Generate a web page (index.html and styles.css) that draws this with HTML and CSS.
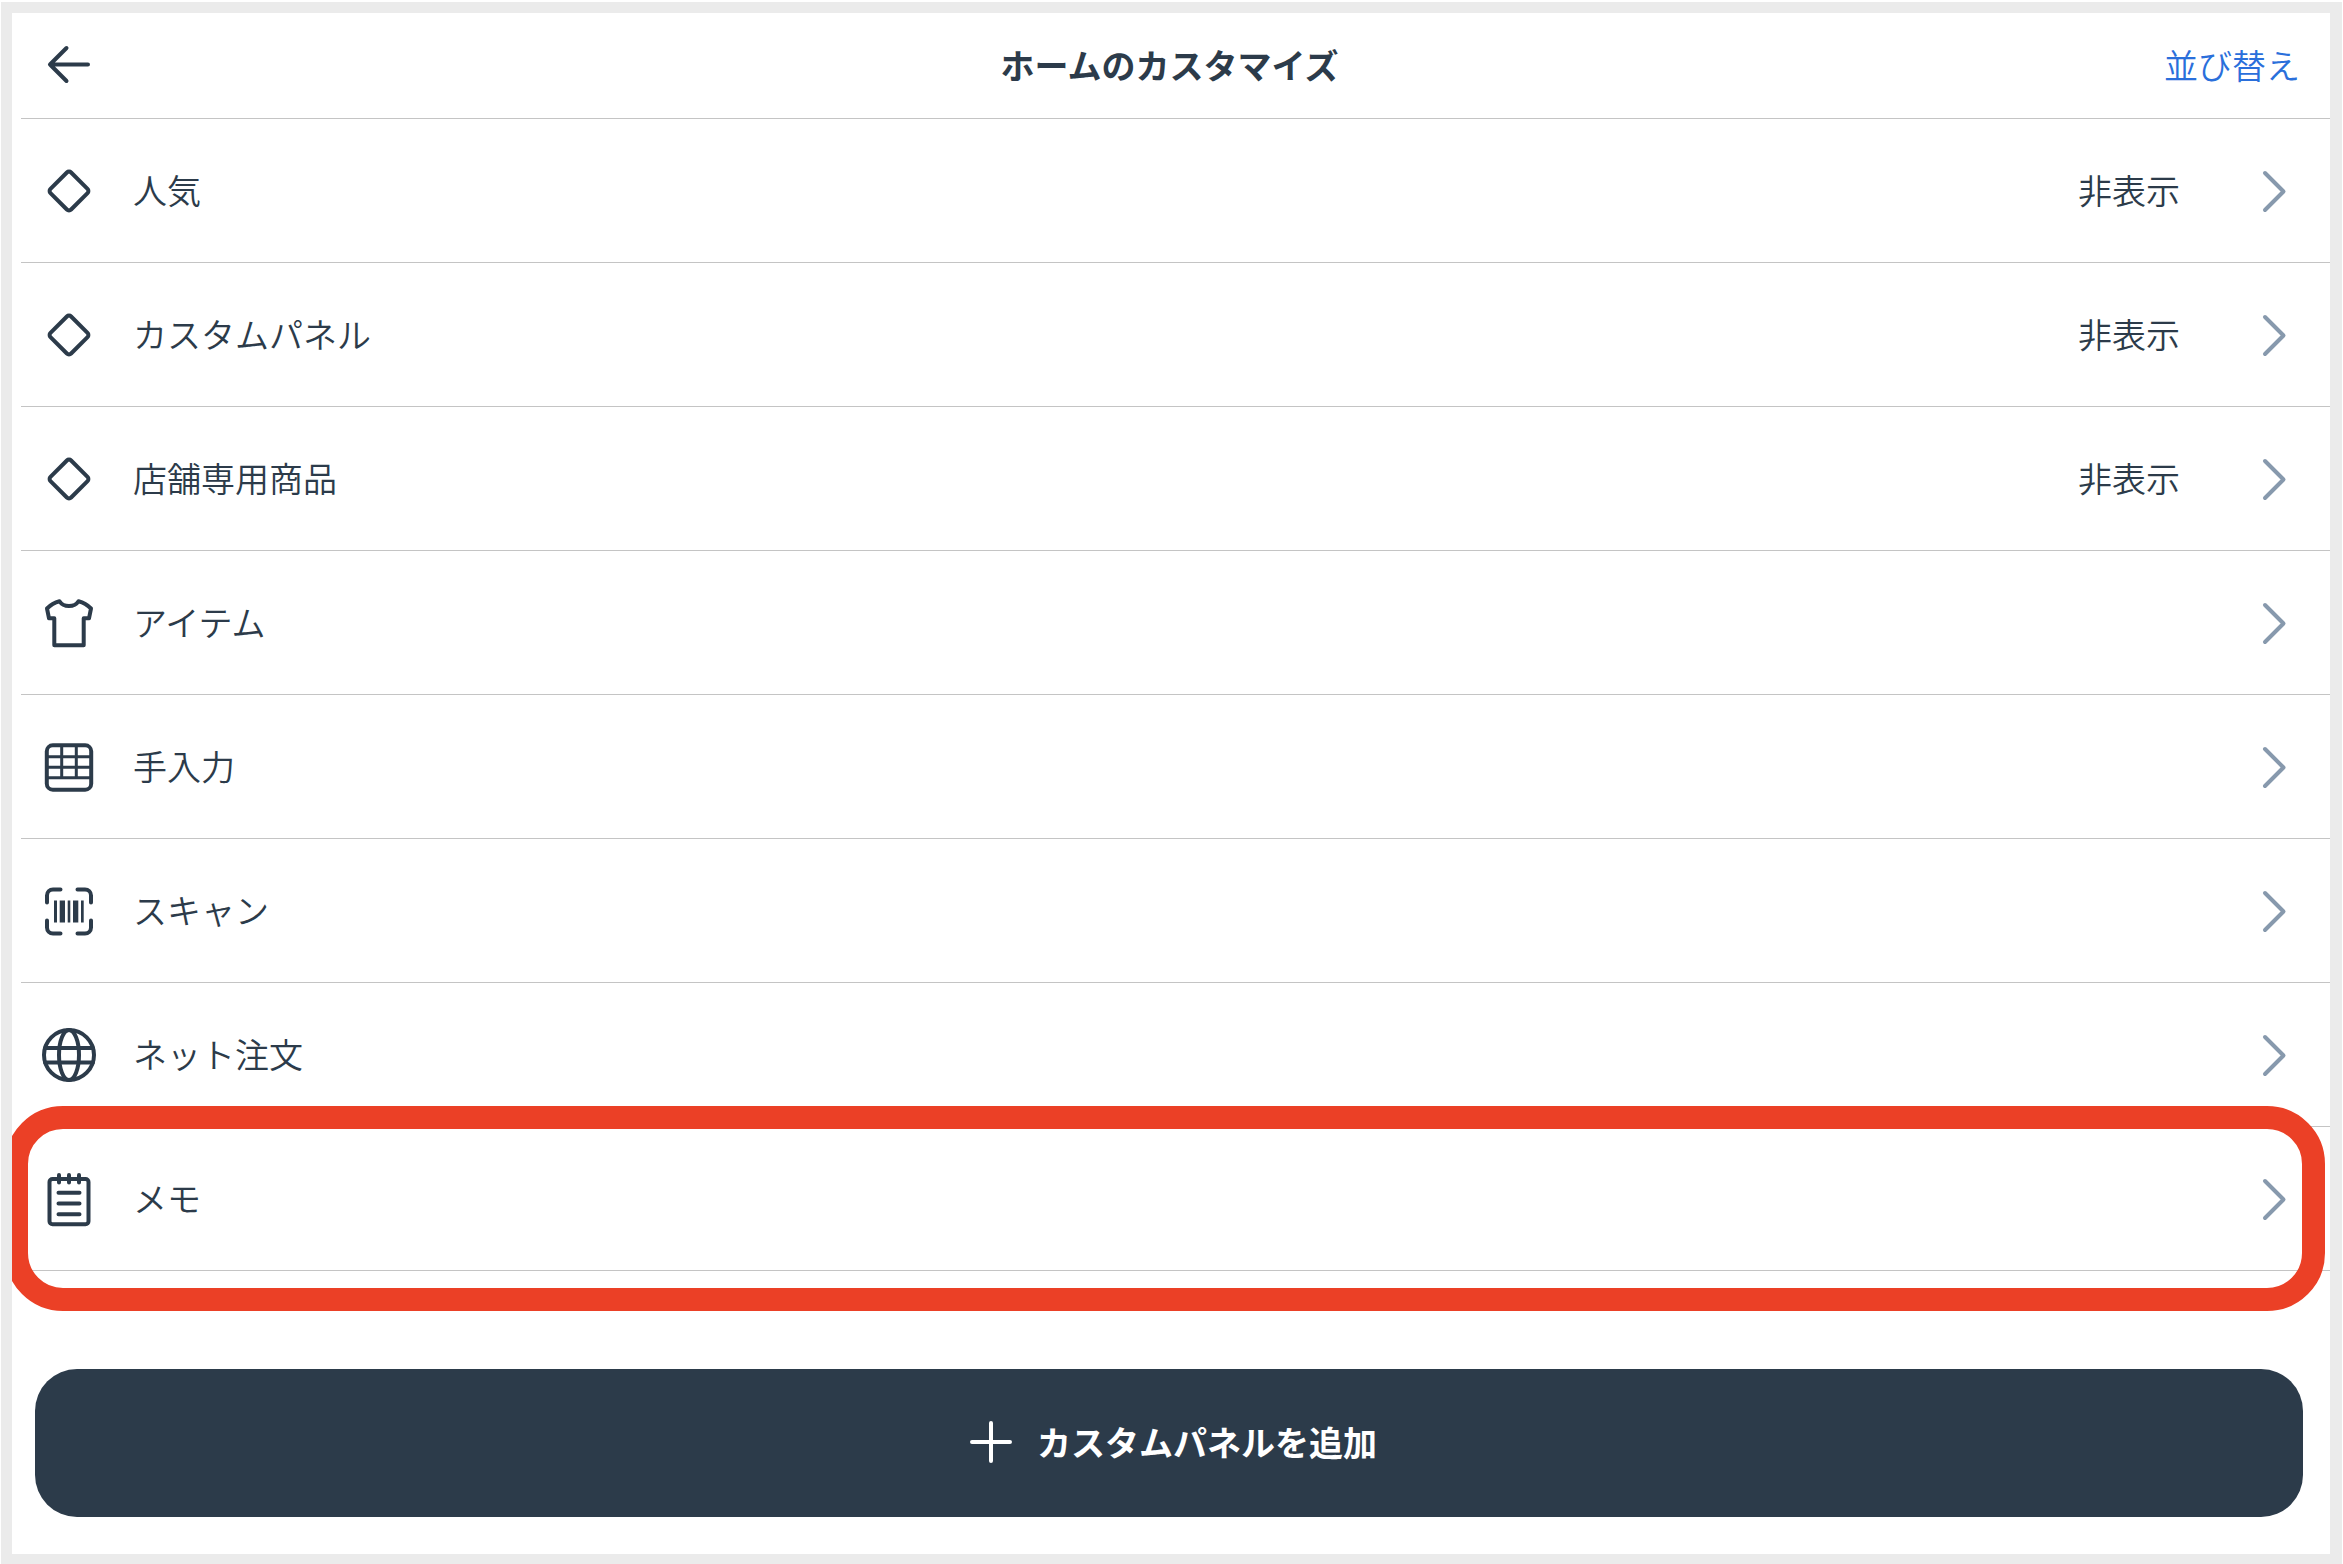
FILE: index.html
```
<!DOCTYPE html>
<html lang="ja">
<head>
    <meta charset="UTF-8">
    <title>ホームのカスタマイズ</title>
    <link rel="stylesheet" href="styles.css">
</head>
<body>
    <div class="panel">
        <header class="header">
            <button class="back" type="button" aria-label="戻る">
                <svg class="icon" viewBox="0 0 48 48"><path d="M21.500 7 5 23.500l16.500 16.500M5 23.500h38"/></svg>
            </button>
            <h1>ホームのカスタマイズ</h1>
            <a class="sort" href="#">並び替え</a>
        </header>

        <ul class="list">
            <li>
                <a class="row" href="#">
                    <svg class="icon" viewBox="0 0 48 48"><rect x="9.400" y="9.400" width="29.200" height="29.200" rx="3" transform="rotate(45 24 24)"/></svg>
                    <span class="name">人気</span>
                    <span class="status">非表示</span>
                    <svg class="chevron" viewBox="0 0 48 48"><path d="M13 6l18.500 18.500L13 43"/></svg>
                </a>
            </li>
            <li>
                <a class="row" href="#">
                    <svg class="icon" viewBox="0 0 48 48"><rect x="9.400" y="9.400" width="29.200" height="29.200" rx="3" transform="rotate(45 24 24)"/></svg>
                    <span class="name">カスタムパネル</span>
                    <span class="status">非表示</span>
                    <svg class="chevron" viewBox="0 0 48 48"><path d="M13 6l18.500 18.500L13 43"/></svg>
                </a>
            </li>
            <li>
                <a class="row" href="#">
                    <svg class="icon" viewBox="0 0 48 48"><rect x="9.400" y="9.400" width="29.200" height="29.200" rx="3" transform="rotate(45 24 24)"/></svg>
                    <span class="name">店舗専用商品</span>
                    <span class="status">非表示</span>
                    <svg class="chevron" viewBox="0 0 48 48"><path d="M13 6l18.500 18.500L13 43"/></svg>
                </a>
            </li>
            <li>
                <a class="row" href="#">
                    <svg class="icon" viewBox="0 0 48 48"><path d="M14.500 2.300C10 3.500 5.500 6 2 9.500L4 19.300h5.300v27h29.400v-27H44l2-9.800C42.500 6 38 3.500 33.500 2.300c-4 6.400-15 6.400-19 0z"/></svg>
                    <span class="name">アイテム</span>
                    <svg class="chevron" viewBox="0 0 48 48"><path d="M13 6l18.500 18.500L13 43"/></svg>
                </a>
            </li>
            <li>
                <a class="row" href="#">
                    <svg class="icon" viewBox="0 0 48 48"><rect x="1.800" y="2.300" width="44.400" height="44.400" rx="6"/><path class="thin" d="M16.700 2.500v32M31.300 2.500v32M2 13.800h44M2 24.200h44M2 34.800h44"/></svg>
                    <span class="name">手入力</span>
                    <svg class="chevron" viewBox="0 0 48 48"><path d="M13 6l18.500 18.500L13 43"/></svg>
                </a>
            </li>
            <li>
                <a class="row" href="#">
                    <svg class="icon" viewBox="0 0 48 48"><path d="M15.500 2.500H8a6 6 0 0 0-6 6v7M32.500 2.500H40a6 6 0 0 1 6 6v7M2 33.500v7a6 6 0 0 0 6 6h7.500M46 33.500v7a6 6 0 0 1-6 6h-7.500"/><path class="bars" d="M9 13.500h3v22H9zM14.700 13.500H20v22h-5.300zM22.700 13.500h2.600v22h-2.600zM28 13.500h5.300v22H28zM36 13.500h2.700v22H36z"/></svg>
                    <span class="name">スキャン</span>
                    <svg class="chevron" viewBox="0 0 48 48"><path d="M13 6l18.500 18.500L13 43"/></svg>
                </a>
            </li>
            <li>
                <a class="row" href="#">
                    <svg class="icon" viewBox="0 0 48 48"><circle cx="24" cy="24" r="25"/><ellipse cx="24" cy="24" rx="10" ry="25"/><path d="M0 17h48M0 31.500h48"/></svg>
                    <span class="name">ネット注文</span>
                    <svg class="chevron" viewBox="0 0 48 48"><path d="M13 6l18.500 18.500L13 43"/></svg>
                </a>
            </li>
            <li class="highlight">
                <a class="row" href="#">
                    <svg class="icon" viewBox="0 0 48 48"><rect x="4.500" y="4" width="39" height="45.300" rx="3"/><path d="M14 0v7.500M24 0v7.500M34 0v7.500M13.500 17.800h21M13.500 28.500h21M13.500 39.200h21"/></svg>
                    <span class="name">メモ</span>
                    <svg class="chevron" viewBox="0 0 48 48"><path d="M13 6l18.500 18.500L13 43"/></svg>
                </a>
            </li>
        </ul>

        <button class="add" type="button">
            <svg class="plus" viewBox="0 0 60 60"><path d="M30 11v38M11 30h38"/></svg>
            カスタムパネルを追加
        </button>
    </div>
</body>
</html>
```

FILE: styles.css
```
* {
    box-sizing: border-box;
}

body {
    margin: 0;
    min-height: 100vh;
    display: flex;
    padding: 11px 12px 10px 11px;
    border: solid #fff;
    border-width: 2px 1px 0;
    background: #ebebeb;
    color: #2c3b4a;
    font-family: 'Noto Sans CJK JP', 'Noto Sans', sans-serif;
    font-size: 34px;
    font-weight: 350;
    line-height: 48px;
}

.panel {
    flex: 1;
    padding-left: 9px;
    background: #fff;
    overflow: hidden;
}

.header {
    display: grid;
    grid-template-columns: 1fr auto 1fr;
    align-items: center;
    height: 106px;
    padding: 0 30px 2px 24px;
    border-bottom: 1px solid #c4c4c4;
}

h1 {
    margin: 0 6px 0 0;
    font-size: inherit;
    font-weight: 700;
}

.back {
    justify-self: start;
    display: flex;
    padding: 0;
    border: none;
    background: none;
    color: inherit;
    cursor: pointer;
}

.sort {
    justify-self: end;
    color: #2a6fdb;
    text-decoration: none;
}

.list {
    margin: 0;
    padding: 0;
    list-style: none;
}

.row {
    display: flex;
    align-items: center;
    height: 144px;
    padding: 0 30px 0 24px;
    border-bottom: 1px solid #c4c4c4;
    color: inherit;
    text-decoration: none;
}

.name,
.status {
    padding-bottom: 2px;
}

.name {
    flex: 1;
    margin-left: 40px;
}

.status {
    margin-right: 72px;
}

.icon,
.chevron,
.plus {
    width: 48px;
    height: 48px;
    overflow: visible;
    fill: none;
    stroke: currentColor;
    stroke-width: 4;
    stroke-linecap: round;
    stroke-linejoin: round;
}

.icon .thin {
    stroke-width: 3;
    stroke-linecap: butt;
}

.icon .bars {
    fill: currentColor;
    stroke: none;
}

.chevron {
    color: #8799ad;
}

/* red ring around the memo row */
.highlight {
    position: relative;
}

.highlight::after {
    content: "";
    position: absolute;
    top: -21px;
    right: 5px;
    bottom: -40px;
    left: -16px;
    border: 23px solid #eb4026;
    border-radius: 58px;
    pointer-events: none;
}

.add {
    display: flex;
    align-items: center;
    justify-content: center;
    gap: 16px;
    width: calc(100% - 41px);
    height: 148px;
    margin: 98px 27px 0 14px;
    padding: 0 0 2px;
    border: none;
    border-radius: 42px;
    background: #2c3b4a;
    color: #fff;
    font: inherit;
    font-weight: 700;
    cursor: pointer;
}

.plus {
    width: 60px;
    height: 60px;
}
```
